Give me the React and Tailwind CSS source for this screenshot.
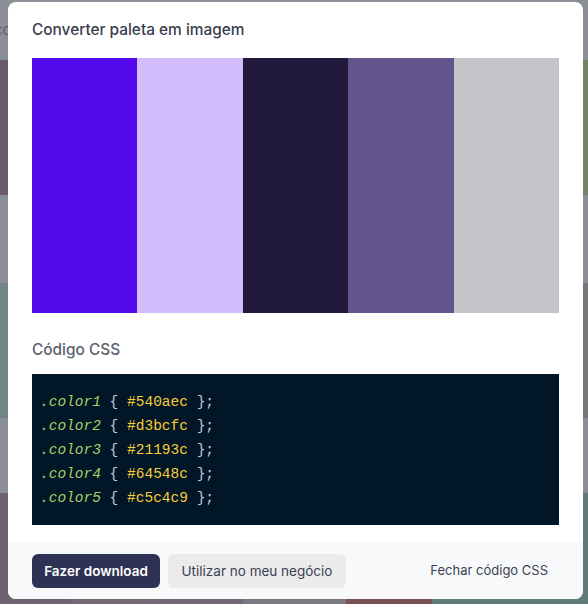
import React from "react";

const palette = ["#540aec", "#d3bcfc", "#21193c", "#64548c", "#c5c4c9"];

const App = () => {
  return (
    <div
      className="relative w-[588px] h-[604px] overflow-hidden bg-[#8b8e97]"
      style={{ fontFamily: "Inter, 'Noto Sans', sans-serif" }}
    >
      {/* dimmed page behind the modal */}
      <div className="flex flex-col h-full">
        <div className="h-[60px] flex items-center text-[15px] text-[#5f6270]">
          <span className="-ml-[6px]">cc</span>
        </div>
        <div className="h-[135px] flex justify-between">
          <div className="w-[8px] bg-[#6b5a6e]" />
          <div className="w-[5px] bg-[#748266]" />
        </div>
        <div className="h-[88px]" />
        <div className="h-[135px] flex justify-between">
          <div className="w-[8px] bg-[#718585]" />
          <div className="w-[5px] bg-[#76767a]" />
        </div>
        <div className="h-[75px]" />
        <div className="flex-1 flex">
          <div className="w-[71px] bg-[#6f6270]" />
          <div className="w-[86px] bg-[#756872]" />
          <div className="w-[86px] bg-[#736775]" />
          <div className="w-[103px] bg-[#7b7880]" />
          <div className="w-[86px] bg-[#7a4f55]" />
          <div className="flex-1 bg-[#5f7b78]" />
        </div>
      </div>

      {/* modal */}
      <div className="absolute left-[8px] top-[2px] w-[575px] h-[597px] bg-white rounded-lg overflow-hidden flex flex-col">
        <div className="px-6 pt-[18px] pb-[17px] flex-1">
          <h2 className="text-[15.4px] leading-5 font-medium text-[#3a3d4d]">
            Converter paleta em imagem
          </h2>
          <div className="mt-[18px] h-[255px] flex">
            {palette.map((c) => (
              <div key={c} className="flex-1" style={{ backgroundColor: c }} />
            ))}
          </div>
          <h3 className="mt-[27px] text-[15.4px] leading-5 font-medium text-[#5b5f6e]">
            Código CSS
          </h3>
          <div
            className="mt-[14px] h-[151px] bg-[#011627] pl-2 pt-4 text-[14.5px] leading-6"
            style={{ fontFamily: "'Liberation Mono', 'DejaVu Sans Mono', monospace" }}
          >
            {palette.map((c, i) => (
              <div key={c} className="whitespace-pre">
                <span className="italic text-[#a5cf67]">.color{i + 1}</span>
                <span className="text-[#c3ccd9]">{" { "}</span>
                <span className="text-[#f7cc38]">{c}</span>
                <span className="text-[#c3ccd9]">{" };"}</span>
              </div>
            ))}
          </div>
        </div>
        <div className="bg-[#f8f9fb] px-6 pt-3 pb-[11px] flex items-center">
          <button className="h-[34px] w-[128px] rounded-md bg-[#2e3356] text-white text-[13.5px] font-semibold">
            Fazer download
          </button>
          <button className="ml-2 h-[34px] w-[178px] rounded-md bg-[#ebebeb] text-[#3c3f52] text-[13.5px]">
            Utilizar no meu negócio
          </button>
          <button className="ml-auto h-[34px] px-[11px] text-[#3c3f52] text-[13px]">
            Fechar código CSS
          </button>
        </div>
      </div>
    </div>
  );
};

export default App;
